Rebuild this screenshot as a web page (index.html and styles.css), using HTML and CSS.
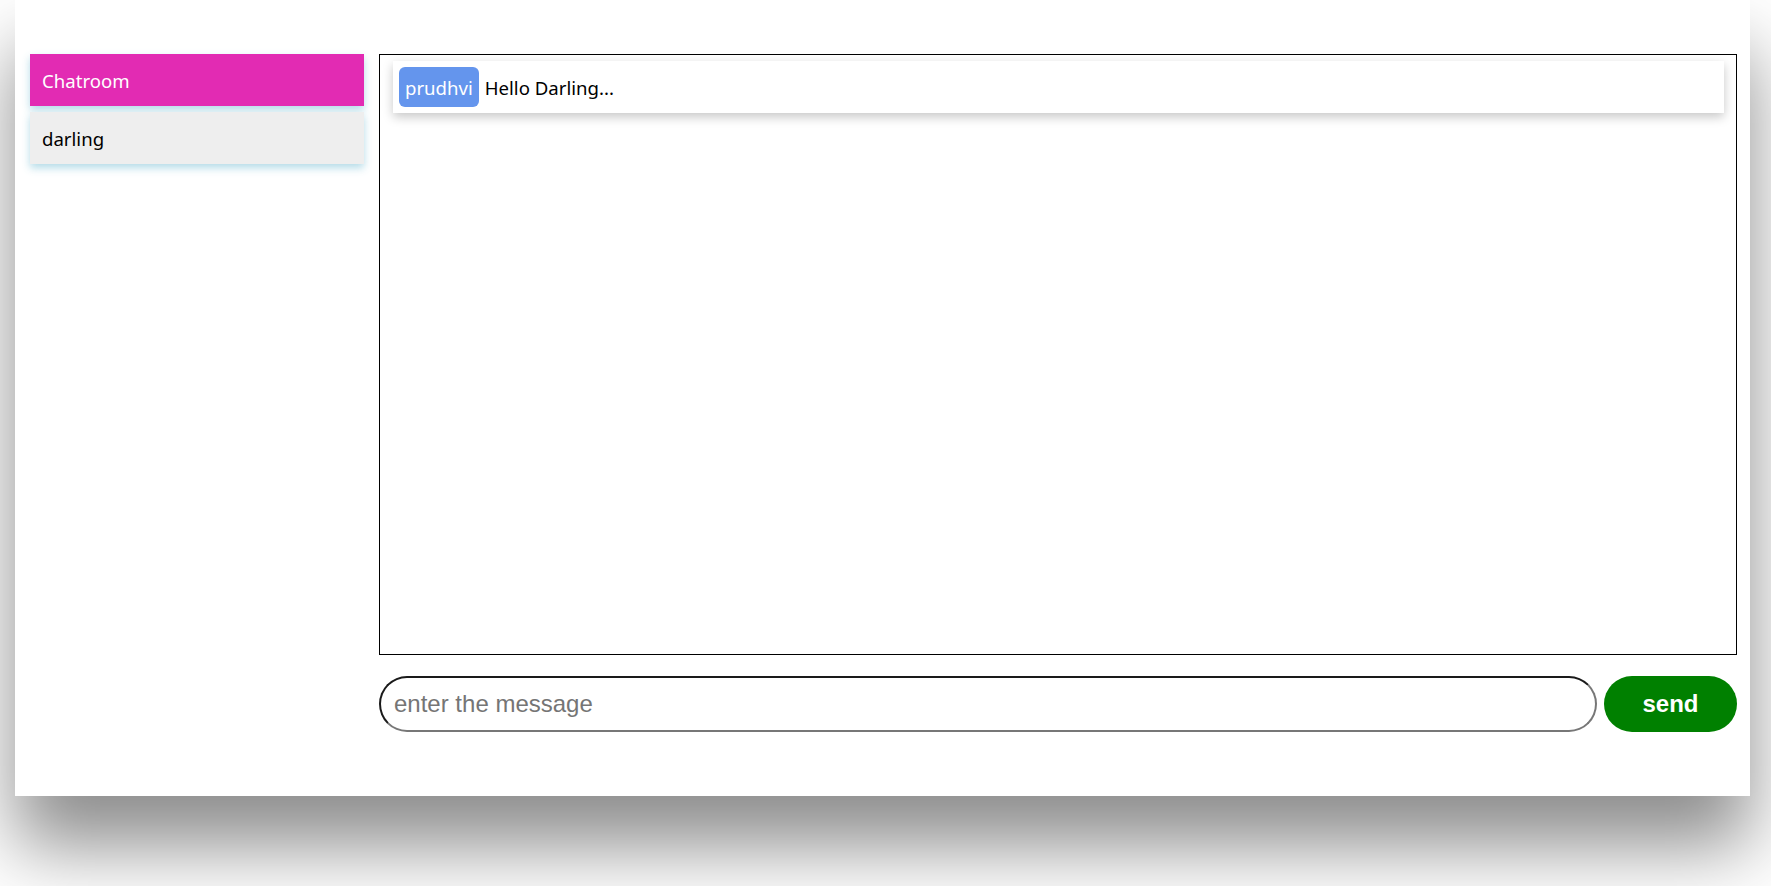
FILE: index.html
```html
<!DOCTYPE html>
<html>
<head>
<meta charset="utf-8">
<link rel="stylesheet" href="styles.css">
</head>
<body>
<div class="card">
  <div class="sidebar">
    <div class="room active">Chatroom</div>
    <div class="room">darling</div>
  </div>
  <div class="main">
    <div class="messages">
      <div class="msg"><span class="user">prudhvi</span><span class="text">Hello Darling...</span></div>
    </div>
    <div class="composer">
      <input class="input" type="text" placeholder="enter the message">
      <button class="send">send</button>
    </div>
  </div>
</div>
</body>
</html>
```
FILE: styles.css
```css
html, body {
  margin: 0;
  padding: 0;
  background: #ffffff;
  overflow: hidden;
}
body {
  width: 1771px;
  height: 886px;
  font-family: "Noto Sans", "Open Sans", sans-serif;
}
.card {
  margin: 0 0 0 15px;
  width: 1735px;
  height: 796px;
  box-sizing: border-box;
  padding: 54px 13px 0 15px;
  background: #fff;
  box-shadow: 0 50px 70px rgba(0, 0, 0, 0.45);
  display: flex;
  gap: 15px;
}
.sidebar {
  width: 334px;
  display: flex;
  flex-direction: column;
  gap: 6px;
}
.room {
  height: 52px;
  box-sizing: border-box;
  padding: 0 12px;
  display: flex;
  align-items: center;
  font-size: 18.6px;
  background: #eeeeee;
  color: #000;
  box-shadow: 0 4px 8px rgba(173, 216, 230, 0.9);
}
.room.active {
  background: #e22bb3;
  color: #fff;
}
.main {
  flex: 1;
  display: flex;
  flex-direction: column;
  gap: 21px;
}
.messages {
  height: 601px;
  box-sizing: border-box;
  border: 1px solid #000;
  padding: 6px 12px 0 13px;
}
.msg {
  height: 52px;
  box-sizing: border-box;
  padding: 6px;
  display: flex;
  align-items: center;
  gap: 6px;
  background: #fff;
  box-shadow: 0 4px 10px rgba(0, 0, 0, 0.22);
  font-size: 18.6px;
}
.user {
  height: 40px;
  padding: 0 6px;
  box-sizing: border-box;
  display: flex;
  align-items: center;
  background: #6495ed;
  color: #fff;
  border-radius: 6px;
}
.text {
  color: #000;
}
.composer {
  display: flex;
  gap: 7px;
  height: 56px;
}
.input {
  flex: 1;
  height: 56px;
  box-sizing: border-box;
  margin: 0;
  border-width: 2px;
  border-style: solid;
  border-color: #1a1a1a #777 #777 #1a1a1a;
  border-radius: 28px;
  padding: 0 13px;
  font-family: "Liberation Sans", Arial, sans-serif;
  font-size: 24px;
  outline: none;
}
.input::placeholder {
  color: #757575;
}
.send {
  width: 133px;
  height: 56px;
  margin: 0;
  border: none;
  border-radius: 28px;
  background: #008000;
  color: #fff;
  font-family: "Liberation Sans", Arial, sans-serif;
  font-weight: bold;
  font-size: 24px;
}
```
